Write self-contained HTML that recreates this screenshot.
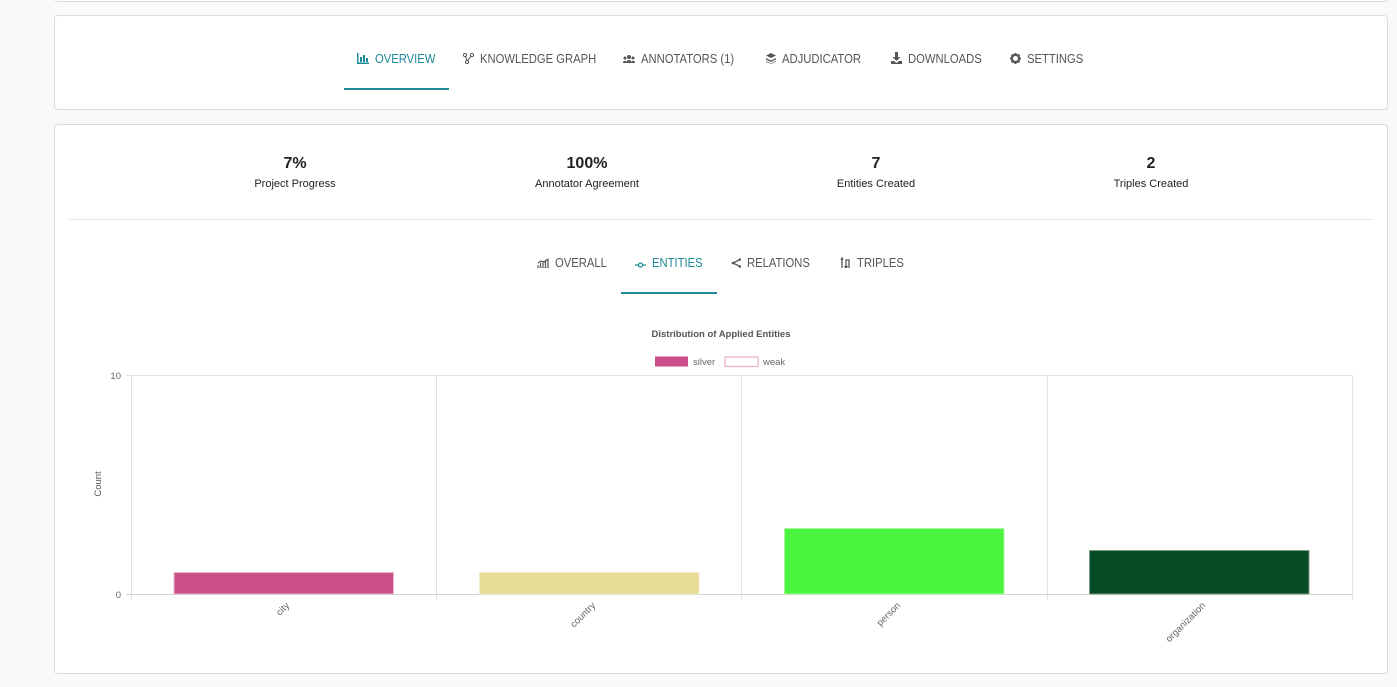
<!DOCTYPE html>
<html><head><meta charset="utf-8"><style>
body{margin:0;width:1397px;height:687px;background:#f9f9f9;font-family:"Liberation Sans",sans-serif;position:relative;overflow:hidden;color:#222}
.card{position:absolute;left:54px;width:1332px;background:#fff;border:1px solid #dcdcdc;border-radius:4px}
.tab{position:absolute;font-size:12.5px;color:#555;white-space:nowrap}
.tab .t{display:inline-block;transform:scaleX(0.9);transform-origin:left center}
.tab.a{color:#1f8a9a}
.ico{display:inline-block;vertical-align:-1px;margin-right:6px}
.stat{position:absolute;text-align:center;width:240px}
.stat b{display:block;font-size:16px;color:#222}
.stat span{display:block;font-size:11px;margin-top:5px;color:#222}
</style></head><body>
<div class="card" style="top:-10px;height:10px"></div>
<div class="card" style="top:15px;height:93px"></div>
<div class="card" style="top:124px;height:548px"></div>

<div class="tab a" style="left:357px;top:52px"><svg class="ico" width="12" height="11" viewBox="0 0 12 11"><path d="M0 0v11h12v-1.5H1.5V0z M3 4h2v5H3z M6 2h2v7H6z M9 5h2v4H9z" fill="#1f8a9a"/></svg><span class="t">OVERVIEW</span></div>
<div style="position:absolute;left:344px;top:88px;width:105px;height:1.5px;background:#1f8a9a"></div>
<div class="tab" style="left:463px;top:52px"><svg class="ico" width="11" height="11" viewBox="0 0 11 11"><circle cx="2" cy="2" r="1.6" fill="none" stroke="#555"/><circle cx="9" cy="2" r="1.6" fill="none" stroke="#555"/><circle cx="4" cy="9" r="1.6" fill="none" stroke="#555"/><path d="M2.5 3.5L4 7.5M8 3L4.8 7.6" stroke="#555"/></svg><span class="t">KNOWLEDGE GRAPH</span></div>
<div class="tab" style="left:623px;top:52px"><svg class="ico" width="12" height="10" viewBox="0 0 12 10"><circle cx="6" cy="3" r="2" fill="#555"/><circle cx="2" cy="4" r="1.5" fill="#555"/><circle cx="10" cy="4" r="1.5" fill="#555"/><path d="M3 9a3 3 0 0 1 6 0zM0 9a2 2 0 0 1 3-2v2zM12 9a2 2 0 0 0-3-2v2z" fill="#555"/></svg><span class="t">ANNOTATORS (1)</span></div>
<div class="tab" style="left:766px;top:52px"><svg class="ico" width="10" height="11" viewBox="0 0 10 11"><path d="M5 0L10 2.5 5 5 0 2.5zM0 5l5 2.5L10 5v1.5L5 9 0 6.5zM0 8l5 2.5L10 8v0.8L5 11 0 8.8z" fill="#555"/></svg><span class="t">ADJUDICATOR</span></div>
<div class="tab" style="left:891px;top:52px"><svg class="ico" width="11" height="12" viewBox="0 0 11 12"><path d="M4 0h3v5h2.5L5.5 9 1.5 5H4zM0 9h3l2.5 2 2.5-2h3v3H0z" fill="#555"/></svg><span class="t">DOWNLOADS</span></div>
<div class="tab" style="left:1010px;top:52px"><svg class="ico" width="11" height="11" viewBox="0 0 11 11"><circle cx="5.5" cy="5.5" r="3.6" fill="none" stroke="#555" stroke-width="2.2"/><path d="M5.5 0v2M5.5 9v2M0 5.5h2M9 5.5h2M1.6 1.6l1.4 1.4M8 8l1.4 1.4M1.6 9.4L3 8M8 3l1.4-1.4" stroke="#555" stroke-width="2"/></svg><span class="t">SETTINGS</span></div>

<div class="stat" style="left:175px;top:155px"><b>7%</b><span>Project Progress</span></div>
<div class="stat" style="left:467px;top:155px"><b>100%</b><span>Annotator Agreement</span></div>
<div class="stat" style="left:756px;top:155px"><b>7</b><span>Entities Created</span></div>
<div class="stat" style="left:1031px;top:155px"><b>2</b><span>Triples Created</span></div>
<div style="position:absolute;left:69px;top:219px;width:1304px;height:1px;background:#e2e2e2"></div>

<div class="tab" style="left:537px;top:256px"><svg class="ico" width="12" height="10" viewBox="0 0 12 10"><path d="M0 10h12M1 9V7M3.5 9V5M6 9V3.5M8.5 9V2M11 9V0.5M1 5l3-2 3 1 4-3" stroke="#555" stroke-width="1.2" fill="none"/></svg><span class="t">OVERALL</span></div>
<div class="tab a" style="left:635px;top:256px"><svg class="ico" width="11" height="6" viewBox="0 0 11 6"><circle cx="5.5" cy="3" r="2" fill="none" stroke="#1f8a9a" stroke-width="1.3"/><path d="M0 3h3.5M7.5 3H11" stroke="#1f8a9a" stroke-width="1.3"/></svg><span class="t">ENTITIES</span></div>
<div style="position:absolute;left:621px;top:292px;width:96px;height:1.5px;background:#1f8a9a"></div>
<div class="tab" style="left:731px;top:256px"><svg class="ico" width="10" height="10" viewBox="0 0 10 10"><path d="M9 1.5L2 5l7 3.5" stroke="#555" stroke-width="1.3" fill="none"/><circle cx="2" cy="5" r="1.3" fill="#555"/><circle cx="9" cy="1.5" r="1.3" fill="#555"/><circle cx="9" cy="8.5" r="1.3" fill="#555"/></svg><span class="t">RELATIONS</span></div>
<div class="tab" style="left:840px;top:256px"><svg class="ico" width="11" height="11" viewBox="0 0 11 11"><path d="M2 1v10M1 3l1-2 1 2M6 11V3h3v8M4.5 9l1.5 2 1.5-2" stroke="#555" stroke-width="1.3" fill="none"/></svg><span class="t">TRIPLES</span></div>

<svg style="position:absolute;left:0;top:0" width="1397" height="687">
<text x="721" y="337" font-size="9.5" font-weight="bold" fill="#555" text-anchor="middle" font-family="Liberation Sans">Distribution of Applied Entities</text>
<rect x="655" y="356.5" width="33" height="10" fill="#cb4f8b"/>
<text x="693" y="365" font-size="9.5" fill="#666" font-family="Liberation Sans">silver</text>
<rect x="725" y="357" width="33" height="9.5" fill="#fff" stroke="#e8b3cc" stroke-width="1.3"/>
<text x="763" y="365" font-size="9.5" fill="#666" font-family="Liberation Sans">weak</text>
<g stroke="#e4e4e4" stroke-width="1">
<line x1="131" y1="375.5" x2="1352" y2="375.5"/>
<line x1="131.5" y1="375" x2="131.5" y2="600"/>
<line x1="436.5" y1="375" x2="436.5" y2="600"/>
<line x1="741.5" y1="375" x2="741.5" y2="600"/>
<line x1="1047.5" y1="375" x2="1047.5" y2="600"/>
<line x1="1352.5" y1="375" x2="1352.5" y2="600"/>
<line x1="126" y1="375.5" x2="131" y2="375.5"/>
</g>
<line x1="126" y1="594.5" x2="1352" y2="594.5" stroke="#d4d4d4"/>
<text x="121" y="379" font-size="9.5" fill="#666" text-anchor="end" font-family="Liberation Sans">10</text>
<text x="121" y="598" font-size="9.5" fill="#666" text-anchor="end" font-family="Liberation Sans">0</text>
<text transform="translate(101,484) rotate(-90)" font-size="9.5" fill="#555" text-anchor="middle" font-family="Liberation Sans">Count</text>
<rect x="174" y="572.5" width="219.5" height="21.5" fill="#cb4f8b" stroke="#e8b3cc"/>
<rect x="479.5" y="572.5" width="219.5" height="21.5" fill="#e6dc94" stroke="#f2ecc6"/>
<rect x="784.5" y="528.5" width="219.5" height="65.5" fill="#4cf63f" stroke="#a8f7a0"/>
<rect x="1089.5" y="550.5" width="219.5" height="43.5" fill="#064a26" stroke="#7e9e88"/>
<g font-size="9.5" fill="#666" font-family="Liberation Sans" text-anchor="end">
<text transform="translate(290,606) rotate(-45)">city</text>
<text transform="translate(596,606) rotate(-45)">country</text>
<text transform="translate(901,606) rotate(-45)">person</text>
<text transform="translate(1206,606) rotate(-45)">organization</text>
</g>
</svg>
</body></html>
